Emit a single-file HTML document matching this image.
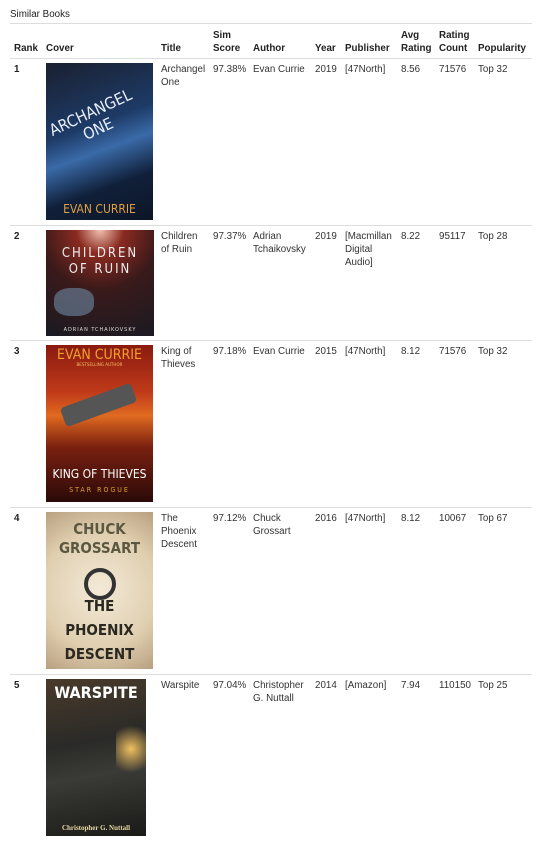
<!DOCTYPE html>
<html><head><meta charset="utf-8"><style>
body{margin:0;width:546px;height:844px;background:#fff;font-family:"Liberation Sans",sans-serif;font-size:9.8px;color:#333;position:relative;overflow:hidden}
.a{position:absolute;line-height:13px;white-space:nowrap}
.h{font-weight:bold;color:#222}
.l{position:absolute;left:10px;width:522px;height:1px;background:#ddd}
.c{position:absolute;left:46px;overflow:hidden;text-align:center;font-family:"DejaVu Sans Condensed","Liberation Sans",sans-serif;white-space:nowrap}
</style></head><body>
<div class="a" style="left:10px;top:8px;color:#222">Similar Books</div>
<div class="l" style="top:23px"></div>
<div class="a h" style="left:213px;top:29px">Sim</div>
<div class="a h" style="left:401px;top:29px">Avg</div>
<div class="a h" style="left:439px;top:29px">Rating</div>
<div class="a h" style="left:14px;top:42px">Rank</div>
<div class="a h" style="left:46px;top:42px">Cover</div>
<div class="a h" style="left:161px;top:42px">Title</div>
<div class="a h" style="left:213px;top:42px">Score</div>
<div class="a h" style="left:253px;top:42px">Author</div>
<div class="a h" style="left:315px;top:42px">Year</div>
<div class="a h" style="left:345px;top:42px">Publisher</div>
<div class="a h" style="left:401px;top:42px">Rating</div>
<div class="a h" style="left:439px;top:42px">Count</div>
<div class="a h" style="left:478px;top:42px">Popularity</div>
<div class="l" style="top:58px"></div>

<!-- row1 -->
<div class="a h" style="left:14px;top:63px">1</div>
<div class="c" style="top:63px;width:107px;height:157px;background:linear-gradient(160deg,#1a2030 0%,#1d3a66 40%,#3a6aa8 55%,#10203a 75%,#0d1526 100%)">
<div style="position:absolute;top:40px;left:4px;color:#e8eef8;font-size:16px;transform:rotate(-25deg);line-height:18px;text-align:center">ARCHANGEL<br>ONE</div>
<div style="position:absolute;bottom:4px;width:100%;color:#e0a040;font-size:12px">EVAN CURRIE</div></div>
<div class="a" style="left:161px;top:63px">Archangel<br>One</div>
<div class="a" style="left:213px;top:63px">97.38%</div>
<div class="a" style="left:253px;top:63px">Evan Currie</div>
<div class="a" style="left:315px;top:63px">2019</div>
<div class="a" style="left:345px;top:63px">[47North]</div>
<div class="a" style="left:401px;top:63px">8.56</div>
<div class="a" style="left:439px;top:63px">71576</div>
<div class="a" style="left:478px;top:63px">Top 32</div>
<div class="l" style="top:225px"></div>

<!-- row2 -->
<div class="a h" style="left:14px;top:230px">2</div>
<div class="c" style="top:230px;width:108px;height:106px;background:radial-gradient(circle at 50% 0%,#f0c0b0 0%,#8a2a20 20%,#3a1a1a 50%,#1a1a22 100%)">
<div style="position:absolute;top:16px;width:100%;color:#eee;font-size:13px;letter-spacing:2px;line-height:16px">CHILDREN<br>OF RUIN</div>
<div style="position:absolute;top:58px;left:8px;width:40px;height:28px;background:#7aa0c0;opacity:.5;border-radius:40%"></div>
<div style="position:absolute;bottom:3px;width:100%;color:#ddd;font-size:5.5px;letter-spacing:1px">ADRIAN TCHAIKOVSKY</div></div>
<div class="a" style="left:161px;top:230px">Children<br>of Ruin</div>
<div class="a" style="left:213px;top:230px">97.37%</div>
<div class="a" style="left:253px;top:230px">Adrian<br>Tchaikovsky</div>
<div class="a" style="left:315px;top:230px">2019</div>
<div class="a" style="left:345px;top:230px">[Macmillan<br>Digital<br>Audio]</div>
<div class="a" style="left:401px;top:230px">8.22</div>
<div class="a" style="left:439px;top:230px">95117</div>
<div class="a" style="left:478px;top:230px">Top 28</div>
<div class="l" style="top:340px"></div>

<!-- row3 -->
<div class="a h" style="left:14px;top:345px">3</div>
<div class="c" style="top:345px;width:107px;height:157px;background:linear-gradient(180deg,#8a1a10 0%,#c03a1a 30%,#e06a20 45%,#7a2010 65%,#2a0a08 100%)">
<div style="position:absolute;top:2px;width:100%;color:#f0a030;font-size:14px">EVAN CURRIE</div>
<div style="position:absolute;top:18px;width:100%;color:#f0c060;font-size:4.5px">BESTSELLING AUTHOR</div>
<div style="position:absolute;top:50px;left:15px;width:75px;height:20px;background:#555;transform:rotate(-20deg);border-radius:4px"></div>
<div style="position:absolute;top:122px;width:100%;color:#fff;font-size:12px">KING OF THIEVES</div>
<div style="position:absolute;top:141px;width:100%;color:#e0a030;font-size:7px;letter-spacing:2px">STAR ROGUE</div></div>
<div class="a" style="left:161px;top:345px">King of<br>Thieves</div>
<div class="a" style="left:213px;top:345px">97.18%</div>
<div class="a" style="left:253px;top:345px">Evan Currie</div>
<div class="a" style="left:315px;top:345px">2015</div>
<div class="a" style="left:345px;top:345px">[47North]</div>
<div class="a" style="left:401px;top:345px">8.12</div>
<div class="a" style="left:439px;top:345px">71576</div>
<div class="a" style="left:478px;top:345px">Top 32</div>
<div class="l" style="top:507px"></div>

<!-- row4 -->
<div class="a h" style="left:14px;top:512px">4</div>
<div class="c" style="top:512px;width:107px;height:157px;background:radial-gradient(circle at 50% 50%,#f4ead8 0%,#e0cfb0 60%,#b8a080 100%)">
<div style="position:absolute;top:8px;width:100%;color:#5a5840;font-size:15px;font-weight:bold;line-height:19px">CHUCK<br>GROSSART</div>
<div style="position:absolute;top:56px;left:38px;width:24px;height:24px;border:4px solid #333;border-radius:50%"></div>
<div style="position:absolute;top:82px;width:100%;color:#2a2820;font-size:15px;font-weight:bold;line-height:24px">THE<br>PHOENIX<br>DESCENT</div></div>
<div class="a" style="left:161px;top:512px">The<br>Phoenix<br>Descent</div>
<div class="a" style="left:213px;top:512px">97.12%</div>
<div class="a" style="left:253px;top:512px">Chuck<br>Grossart</div>
<div class="a" style="left:315px;top:512px">2016</div>
<div class="a" style="left:345px;top:512px">[47North]</div>
<div class="a" style="left:401px;top:512px">8.12</div>
<div class="a" style="left:439px;top:512px">10067</div>
<div class="a" style="left:478px;top:512px">Top 67</div>
<div class="l" style="top:674px"></div>

<!-- row5 -->
<div class="a h" style="left:14px;top:679px">5</div>
<div class="c" style="top:679px;width:100px;height:157px;background:linear-gradient(170deg,#4a3a2a 0%,#2a2a28 40%,#3a3a36 60%,#1a1a18 100%)">
<div style="position:absolute;top:4px;width:100%;color:#fff;font-size:16px;font-weight:bold">WARSPITE</div>
<div style="position:absolute;top:40px;right:0;width:30px;height:60px;background:radial-gradient(circle,#f0c060 0%,transparent 70%)"></div>
<div style="position:absolute;bottom:4px;width:100%;color:#e8d8a0;font-size:7px;font-family:'Liberation Serif',serif;font-weight:bold">Christopher G. Nuttall</div></div>
<div class="a" style="left:161px;top:679px">Warspite</div>
<div class="a" style="left:213px;top:679px">97.04%</div>
<div class="a" style="left:253px;top:679px">Christopher<br>G. Nuttall</div>
<div class="a" style="left:315px;top:679px">2014</div>
<div class="a" style="left:345px;top:679px">[Amazon]</div>
<div class="a" style="left:401px;top:679px">7.94</div>
<div class="a" style="left:439px;top:679px">110150</div>
<div class="a" style="left:478px;top:679px">Top 25</div>
</body></html>
